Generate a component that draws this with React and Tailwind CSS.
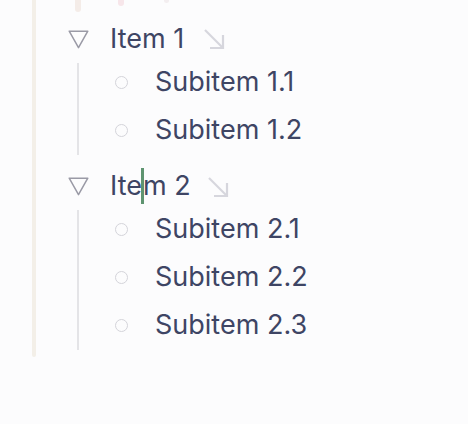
const groups = [
  { label: "Item 1", subs: ["Subitem 1.1", "Subitem 1.2"] },
  { label: "Item 2", subs: ["Subitem 2.1", "Subitem 2.2", "Subitem 2.3"], cursor: true },
];

function Triangle() {
  return (
    <svg width="21" height="19" viewBox="0 0 21 19" fill="none">
      <path d="M1.2 1.2h18.6L10.5 17.6z" stroke="#9a9aa6" strokeWidth="1.5" strokeLinejoin="round" />
    </svg>
  );
}

function Arrow() {
  return (
    <svg width="22" height="22" viewBox="0 0 22 22" fill="none" stroke="#d6d6dd" strokeWidth="2.2">
      <path d="M2 2l18 18" />
      <path d="M20 7v13H7" />
    </svg>
  );
}

function ItemLabel({ text, cursor }) {
  if (!cursor) return <span>{text}</span>;
  return (
    <span className="flex items-center">
      Ite
      <span className="mx-[-1px] h-[36px] w-[3px] bg-[#5e9470]" />
      m 2
    </span>
  );
}

export default function App() {
  return (
    <div className="h-[424px] w-[468px] bg-[#fcfcfd] text-[#3e4564]" style={{ fontFamily: "Inter, 'Noto Sans', sans-serif" }}>
      <div className="flex pl-8">
        <div className="h-[357px] w-1 rounded-b-full bg-[#f3efe8]" />
        <div className="ml-[32px] w-[320px]">
          {/* ends of content above, cut off */}
          <div className="flex h-[12px] items-start">
            <div className="ml-[7px] h-[12px] w-[6px] rounded-b-full bg-[#f4ece8]" />
            <div className="ml-[37px] h-[6px] w-[6px] rounded-b-full bg-[#f7e6ea]" />
            <div className="ml-[40px] h-[3px] w-[5px] rounded-b-full bg-[#f3eef0]" />
          </div>
          <div className="pt-[8px]">
            {groups.map((g, gi) => (
              <div key={g.label} className={gi === 0 ? "mb-[13px]" : ""}>
                <div className="flex h-[38px] items-center text-[27px]">
                  <Triangle />
                  <div className="ml-[21px]">
                    <ItemLabel text={g.label} cursor={g.cursor} />
                  </div>
                  <div className={g.cursor ? "ml-[16px] mt-[2px]" : "ml-[19px]"}>
                    <Arrow />
                  </div>
                </div>
                <div className="flex">
                  <div className="mb-[-1px] ml-[9px] mt-[5px] w-[2px] bg-[#e4e4e7]" />
                  <div className="ml-[36px]">
                    {g.subs.map((s) => (
                      <div key={s} className="flex h-[48px] items-center text-[27px]">
                        <div className="h-[13px] w-[13px] rounded-full border border-[#d4d4da]" />
                        <span className="ml-[27px]">{s}</span>
                      </div>
                    ))}
                  </div>
                </div>
              </div>
            ))}
          </div>
        </div>
      </div>
    </div>
  );
}
